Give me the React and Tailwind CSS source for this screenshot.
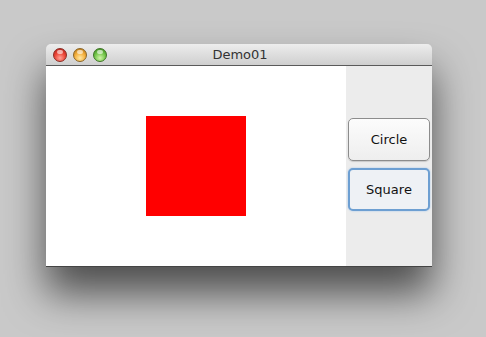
import React from 'react';

const font = { fontFamily: '"DejaVu Sans", "Liberation Sans", sans-serif' };

function TrafficLight({ color }) {
  const colors = {
    red: 'bg-[radial-gradient(circle_at_50%_75%,#ffa296_0%,#ec4436_50%,#a8201a_100%)] border-[#8a2a22]',
    yellow: 'bg-[radial-gradient(circle_at_50%_75%,#ffe8a4_0%,#f4ae3a_50%,#a86c14_100%)] border-[#8a6424]',
    green: 'bg-[radial-gradient(circle_at_50%_75%,#d0f4a8_0%,#74c64a_50%,#34801a_100%)] border-[#3c7424]',
  };
  return (
    <div className={`relative w-[14px] h-[14px] rounded-full border ${colors[color]}`}>
      <div className="absolute left-[3px] top-[1px] w-[6px] h-[4px] rounded-full bg-white/60" />
    </div>
  );
}

export default function App() {
  return (
    <div className="w-[486px] h-[337px] bg-[#c9c9c9] pt-[44px] pl-[46px] overflow-hidden" style={font}>
      <div className="w-[386px] shadow-[0_26px_40px_rgba(0,0,0,0.62)] rounded-t-[5px]">
        {/* Title bar */}
        <div className="relative h-[22px] rounded-t-[5px] bg-gradient-to-b from-[#ededed] to-[#cfcfcf] border-b border-[#5a5a5a] flex items-center">
          <div className="flex items-center gap-[6px] pl-[7px]">
            <TrafficLight color="red" />
            <TrafficLight color="yellow" />
            <TrafficLight color="green" />
          </div>
          <div className="absolute inset-0 flex items-center justify-center text-[13px] text-[#333] pl-[2px]">
            Demo01
          </div>
        </div>
        {/* Content */}
        <div className="flex h-[201px] border-b border-[#444]">
          <div className="w-[300px] bg-white flex items-center justify-center">
            <div className="w-[100px] h-[100px] bg-[#ff0000]" />
          </div>
          <div className="flex-1 bg-[#ececec] flex flex-col items-center justify-center gap-[7px] pb-[3px]">
            <button className="w-[82px] h-[43px] rounded-[5px] border border-[#8c8c8c] bg-gradient-to-b from-[#fcfcfc] to-[#eeeeee] text-[13px] text-[#111] shadow-[0_1px_1px_rgba(0,0,0,0.15)]">
              Circle
            </button>
            <button className="w-[82px] h-[43px] rounded-[5px] border-2 border-[#6d9fd2] bg-[#eef1f5] text-[13px] text-[#111] shadow-[0_0_2px_#9cc2ea]">
              Square
            </button>
          </div>
        </div>
      </div>
    </div>
  );
}
